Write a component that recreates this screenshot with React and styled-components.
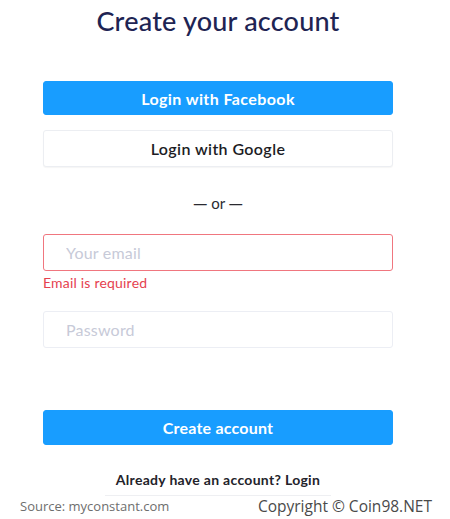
import React from "react";
import styled, { createGlobalStyle } from "styled-components";

const GlobalStyle = createGlobalStyle`
  body {
    margin: 0;
    background: #fff;
    font-family: Lato, "Noto Sans", sans-serif;
  }
`;

function App() {
  return (
    <>
      <GlobalStyle />
      <Page>
        <Form>
          <Title>Create your account</Title>
          <Button $primary>Login with Facebook</Button>
          <Button $spaced>Login with Google</Button>
          <Divider>
            <Dash>—</Dash> or <Dash>—</Dash>
          </Divider>
          <Input $error placeholder="Your email" />
          <ErrorText>Email is required</ErrorText>
          <Input $spaced placeholder="Password" type="password" />
          <Button $primary $big>Create account</Button>
          <LoginLink>
            Already have an account? <span>Login</span>
          </LoginLink>
        </Form>
        <Footer>
          <Source>Source: myconstant.com</Source>
          <Copyright>Copyright © Coin98.NET</Copyright>
        </Footer>
      </Page>
    </>
  );
}

const Page = styled.div`
  width: 450px;
  height: 519px;
  display: flex;
  flex-direction: column;
`;

const Form = styled.div`
  width: 350px;
  margin-left: 43px;
  display: flex;
  flex-direction: column;
  align-items: stretch;
`;

const Title = styled.h1`
  margin: 4px 0 0;
  height: 77px;
  text-align: center;
  font-size: 27px;
  line-height: 34px;
  font-weight: 500;
  letter-spacing: 0.2px;
  color: #1e2453;
`;

const Button = styled.button`
  height: ${(p) => (p.$big ? "35px" : p.$primary ? "34px" : "37px")};
  margin-top: ${(p) => (p.$spaced ? "15px" : p.$big ? "62px" : "0")};
  border-radius: 3px;
  border: 1px solid ${(p) => (p.$primary ? "#189dff" : "#eceef2")};
  background: ${(p) => (p.$primary ? "#189dff" : "#fff")};
  color: ${(p) => (p.$primary ? "#fff" : "#1c1c24")};
  font-family: Lato, "Noto Sans", sans-serif;
  font-size: 16px;
  font-weight: ${(p) => (p.$primary ? 700 : 600)};
  letter-spacing: ${(p) => (p.$big ? "0.2px" : "0.4px")};
  padding: 0;
  box-shadow: ${(p) => (p.$primary ? "none" : "0 1px 1px rgba(0,0,0,0.04)")};
`;

const Divider = styled.div`
  height: 67px;
  line-height: 72px;
  text-align: center;
  font-size: 15px;
  color: #2a2a30;
`;

const Dash = styled.span`
  font-family: "Noto Sans", sans-serif;
  font-size: 14px;
`;

const Input = styled.input`
  height: 37px;
  box-sizing: border-box;
  margin-top: ${(p) => (p.$spaced ? "12px" : "0")};
  border: 1px solid ${(p) => (p.$error ? "#f0767f" : "#eceef4")};
  border-radius: 3px;
  padding: 0 22px;
  font-family: Lato, "Noto Sans", sans-serif;
  font-size: 16px;
  letter-spacing: 0.2px;
  outline: none;
  &::placeholder {
    color: #c7cad8;
  }
`;

const ErrorText = styled.div`
  margin-top: 4px;
  height: 24px;
  line-height: 16px;
  font-size: 14px;
  letter-spacing: 0.2px;
  color: #e5414f;
`;

const LoginLink = styled.div`
  align-self: center;
  margin-top: 26px;
  padding: 0 11px 7px;
  border-bottom: 1px solid #eeeff2;
  font-size: 14px;
  font-weight: 700;
  letter-spacing: 0.3px;
  color: #23232a;
  span {
    color: #23232a;
  }
`;

const Footer = styled.div`
  display: flex;
  justify-content: space-between;
  align-items: center;
  padding: 0 18px 0 20px;
  margin-top: -1px;
  font-family: "Open Sans", "Noto Sans", sans-serif;
`;

const Source = styled.div`
  font-size: 13px;
  color: #6e6e6e;
`;

const Copyright = styled.div`
  font-size: 15.5px;
  color: #4a4a4a;
`;

export default App;
